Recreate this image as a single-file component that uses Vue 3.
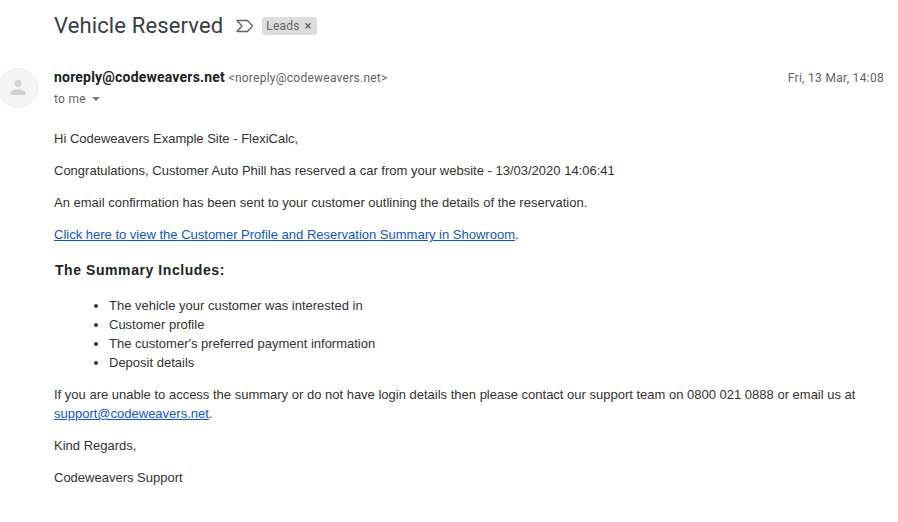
<template>
  <div class="mail">
    <div class="subject">
      <h1 class="title">Vehicle Reserved</h1>
      <svg class="imp" width="20" height="14" viewBox="0 0 20 14"><path d="M2 1.5H12.5L17.5 7L12.5 12.5H2L7 7Z" fill="none" stroke="#5f6368" stroke-width="1.3" stroke-linejoin="round"/></svg>
      <span class="chip">Leads<span class="x">×</span></span>
    </div>
    <div class="head">
      <div class="avatar">
        <svg width="20" height="20" viewBox="0 0 20 20"><circle cx="10" cy="5.5" r="3.6" fill="#d2d2d2"/><path d="M2.5 17v-1.6c0-2.8 5-4.2 7.5-4.2s7.5 1.4 7.5 4.2V17z" fill="#d2d2d2"/></svg>
      </div>
      <div class="who">
        <div class="from"><b>noreply@codeweavers.net</b> <span class="addr">&lt;noreply@codeweavers.net&gt;</span></div>
        <div class="to">to me <i class="caret"></i></div>
      </div>
      <div class="date">Fri, 13 Mar, 14:08</div>
    </div>
    <div class="body">
      <p>Hi Codeweavers Example Site - FlexiCalc,</p>
      <p>Congratulations, Customer Auto Phill has reserved a car from your website - 13/03/2020 14:06:41</p>
      <p>An email confirmation has been sent to your customer outlining the details of the reservation.</p>
      <p><a href="#">Click here to view the Customer Profile and Reservation Summary in Showroom</a>.</p>
      <h3>The Summary Includes:</h3>
      <ul>
        <li>The vehicle your customer was interested in</li>
        <li>Customer profile</li>
        <li>The customer's preferred payment information</li>
        <li>Deposit details</li>
      </ul>
      <p>If you are unable to access the summary or do not have login details then please contact our support team on 0800 021 0888 or email us at <a href="#">support@codeweavers.net</a>.</p>
      <p>Kind Regards,</p>
      <p>Codeweavers Support</p>
    </div>
  </div>
</template>

<script setup>
</script>

<style>
html, body { margin: 0; background: #fff; }
</style>
<style scoped>
.mail { width: 898px; height: 522px; overflow: hidden; box-sizing: border-box; font-family: Roboto, sans-serif; color: #222; position: relative; padding: 0 14px 0 0; }
.subject { display: flex; align-items: center; height: 26px; margin-top: 13px; padding-left: 54px; }
.title { margin: 0; font-size: 22px; font-weight: 400; color: #3a3c40; line-height: 26px; letter-spacing: .13px; }
.imp { margin-left: 12px; }
.chip { margin-left: 7px; height: 18px; line-height: 18px; background: #ddd; border-radius: 3px; font-size: 12px; color: #666; padding: 0 5px 0 4px; display: flex; letter-spacing: .2px; }
.x { margin-left: 5px; font-size: 13px; color: #555; }
.head { display: flex; margin-top: 28px; height: 42px; }
.avatar { width: 40px; height: 40px; margin: 1px 16px 0 -2px; border-radius: 50%; background: #f5f5f5; border: 1px solid #eee; box-sizing: border-box; display: flex; align-items: center; justify-content: center; flex: none; }
.who { flex: 1; }
.from { font-size: 14px; line-height: 20px; color: #202124; }
.from b { font-weight: 700; letter-spacing: .2px; }
.addr { font-size: 12px; color: #5f6368; letter-spacing: .25px; }
.to { font-size: 12px; line-height: 20px; color: #5f6368; display: flex; align-items: center; letter-spacing: .3px; margin-top: 1px; }
.caret { width: 0; height: 0; border: 4px solid transparent; border-top-color: #777; border-bottom: 0; margin-left: 6px; }
.date { font-size: 12px; color: #5f6368; line-height: 20px; letter-spacing: .3px; margin-top: 1px; }
.body { margin-top: 20px; padding-left: 54px; font-family: "Liberation Sans", Arial, sans-serif; font-size: 13px; line-height: 19px; color: #333; }
p { margin: 0 0 13px; }
a { color: #15c; }
h3 { margin: 0 0 16px; font-size: 14px; font-weight: 700; padding: 3px 0 0 1px; line-height: 20px; letter-spacing: .57px; color: #222; }
ul { margin: 0 0 13px; padding-left: 55px; }
li { line-height: 19px; }
</style>
